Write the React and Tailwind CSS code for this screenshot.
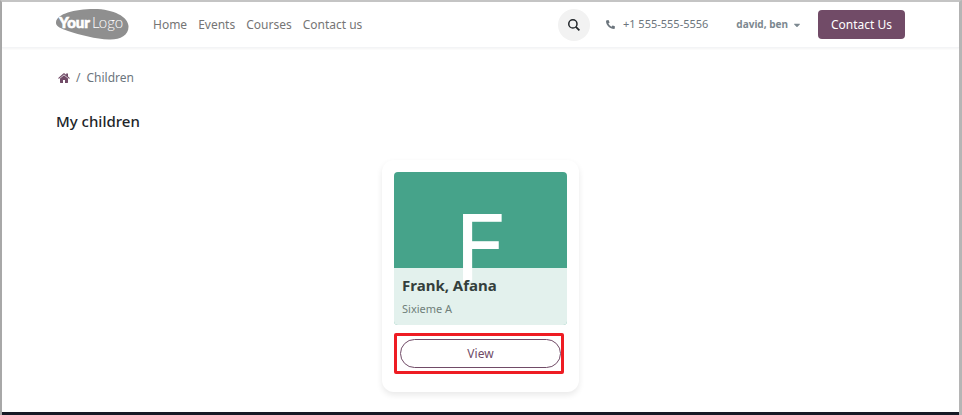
import React from "react";
import { FaPhoneAlt, FaCaretDown } from "react-icons/fa";

const links = ["Home", "Events", "Courses", "Contact us"];

const children = [{ name: "Frank, Afana", grade: "Sixieme A" }];

function Logo() {
  return (
    <svg viewBox="0 0 73 32" className="h-8 w-[73px]" role="img" aria-label="YourLogo">
      <path
        d="M0 13C1 5 18 0 38 0c20 0 34 8 34.500 17C73 26 64 31 53 30.500 40 30 24 26 12 22 4 19-.5 17 0 13Z"
        fill="#8f8f8f"
      />
      <text x="3" y="19" fontFamily="Lato, sans-serif" fontSize="15" fontWeight="900" fill="#fff" stroke="#fff" strokeWidth="0.6">
        Your
      </text>
      <text x="36" y="19" fontFamily="Lato, sans-serif" fontSize="15" fontWeight="300" fill="#fff">
        Logo
      </text>
    </svg>
  );
}

function HomeIcon() {
  return (
    <svg viewBox="0 0 24 24" className="size-3" fill="currentColor" aria-hidden="true">
      <path d="M12 6.500 4 13.200V21c0 .6.4 1 1 1h5v-6h4v6h5c.6 0 1-.4 1-1v-7.800Z" />
      <path d="M23.500 11.800 20 8.800V3.500c0-.3-.2-.5-.5-.5h-2.700c-.3 0-.5.2-.5.5v2.200L13.400 3c-.8-.7-2-.7-2.800 0L.5 11.800c-.2.200-.2.500 0 .7l.8 1c.2.2.5.2.7 0L12 5l10 8.500c.2.2.5.2.7 0l.8-1c.2-.2.2-.5 0-.7Z" />
    </svg>
  );
}

function Header() {
  return (
    <header className="flex h-[46px] items-center border-b border-gray-100 px-[54px] text-[12px] shadow-xs">
      <a href="#home">
        <Logo />
      </a>
      <nav className="ml-6 flex gap-[11px] text-[#757575]">
        {links.map((label) => (
          <a key={label} href="#nav" className="hover:text-black">
            {label}
          </a>
        ))}
      </nav>
      <div className="ml-auto flex items-center">
        <button
          type="button"
          aria-label="Search"
          className="flex size-8 items-center justify-center rounded-full bg-[#f2f2f2] text-[#212529]"
        >
          <svg viewBox="0 0 16 16" className="size-3" fill="none" stroke="currentColor" strokeWidth="2">
            <circle cx="6.500" cy="6.500" r="5.500" />
            <path d="M10.500 10.500 15.200 15.200" strokeWidth="2.400" />
          </svg>
        </button>
        <a href="tel:+15555555556" className="ml-4 flex items-center gap-2 text-[11px] text-[#6c757d]">
          {/* handset with the earpiece at the top left */}
          <FaPhoneAlt className="size-[9px] -scale-x-100 rotate-90" />
          +1 555-555-5556
        </a>
        <button type="button" className="ml-7 flex items-center gap-1 text-[10px] font-bold text-[#7c8890]">
          david, ben
          <FaCaretDown className="size-[10px]" />
        </button>
        <a href="#contact" className="ml-4 rounded-sm bg-[#714b67] px-[13px] py-[5px] leading-[19px] text-white">
          Contact Us
        </a>
      </div>
    </header>
  );
}

function ChildCard({ name, grade }) {
  return (
    <article className="w-[197px] rounded-xl px-3 pt-3 pb-[18px] shadow-[0_3px_6px_rgba(0,0,0,0.09)]">
      <div className="relative h-[153px] overflow-hidden rounded-sm bg-[#46a38a]">
        <div className="text-center font-['DejaVu_Sans',sans-serif] text-[92px] leading-[156px] text-white">F</div>
        <div className="absolute inset-x-0 bottom-0 h-[57px] bg-white/85 px-2 pt-[7px]">
          <h2 className="text-[15px] leading-5 font-bold text-[#343f3c]">{name}</h2>
          <p className="mt-1 text-[11px] leading-5 text-[#6f7f7a]">{grade}</p>
        </div>
      </div>
      <div className="mt-2 w-[170px] rounded-xs border-[3px] border-[#ee1c23] py-[3px] pr-0 pl-[3px]">
        <button
          type="button"
          className="block h-[29px] w-full rounded-full border border-[#714b67] text-[12px] text-[#714b67]"
        >
          View
        </button>
      </div>
    </article>
  );
}

export default function App() {
  return (
    <div className="flex min-h-screen flex-col border-t-2 border-r-3 border-l-2 border-t-[#c4c4c4] border-r-[#b5b5b5] border-l-[#a8a8a8] bg-white font-['Noto_Sans',sans-serif]">
      <Header />
      <main className="flex-1 px-[54px] pb-5">
        <nav aria-label="Breadcrumb" className="flex items-center pt-5 pl-[2px] text-[12px] leading-5 text-[#6c757d]">
          <a href="#home" aria-label="Home" className="text-[#714b67]">
            <HomeIcon />
          </a>
          <span className="mx-1.5">/</span>
          <span>Children</span>
        </nav>
        <h1 className="mt-[23px] text-[15px] leading-5 font-medium text-[#212529]">My children</h1>
        <section className="mt-[29px] flex justify-center">
          {children.map((child) => (
            <ChildCard key={child.name} name={child.name} grade={child.grade} />
          ))}
        </section>
      </main>
      <footer className="h-[3px] bg-[#171a26]" />
    </div>
  );
}
